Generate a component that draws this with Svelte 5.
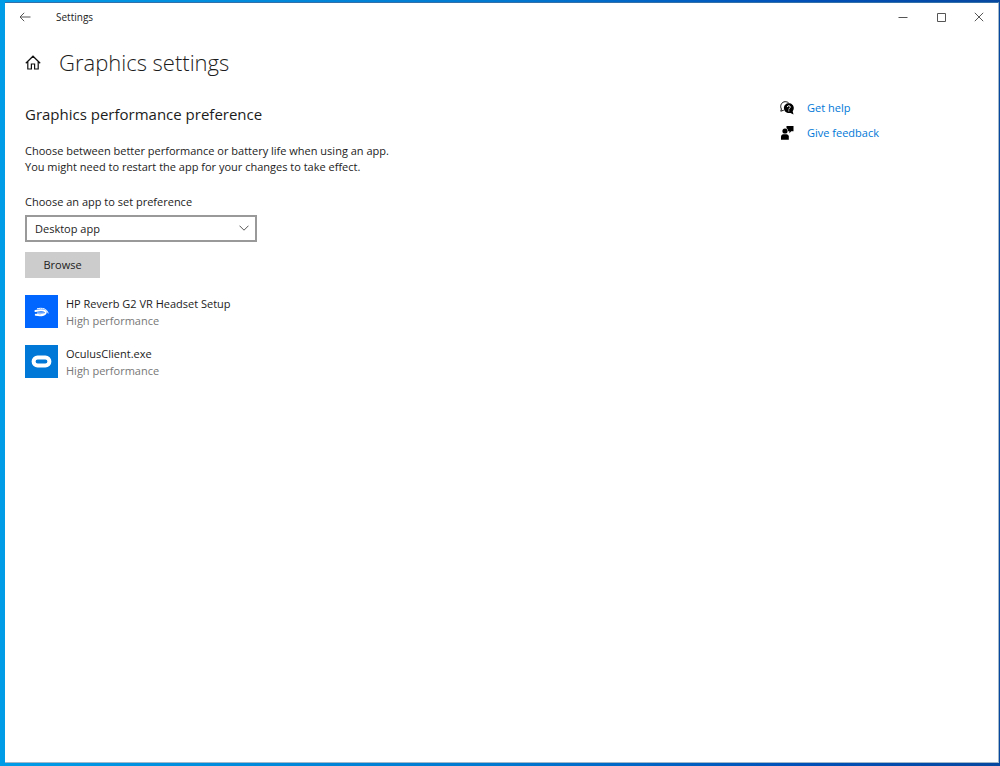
<script lang="ts">
  let selected = 'Desktop app';

  const apps = [
    { name: 'HP Reverb G2 VR Headset Setup', preference: 'High performance', icon: 'reverb' },
    { name: 'OculusClient.exe', preference: 'High performance', icon: 'oculus' }
  ];
</script>

<div class="desktop">
  <div class="window">
    <header class="titlebar">
      <button class="back" type="button" aria-label="Back">
        <svg width="12" height="10" viewBox="0 0 12 10"><path d="M11.5 5H1M5.2 0.8L1 5l4.2 4.2" /></svg>
      </button>
      <span class="caption">Settings</span>
      <div class="window-buttons">
        <button type="button" aria-label="Minimize">
          <svg width="10" height="10" viewBox="0 0 10 10"><path d="M0.5 5.5h9" /></svg>
        </button>
        <button type="button" aria-label="Maximize">
          <svg width="10" height="10" viewBox="0 0 10 10"><path d="M1.5 1.5h8v8h-8z" /></svg>
        </button>
        <button type="button" aria-label="Close">
          <svg width="10" height="10" viewBox="0 0 10 10"><path d="M0.8 0.8l8.4 8.4M9.2 0.8L0.8 9.2" /></svg>
        </button>
      </div>
    </header>

    <div class="page-title">
      <button class="home" type="button" aria-label="Home">
        <svg width="16" height="16" viewBox="0 0 16 16">
          <path d="M0.8 9.2L8 2.2l7.2 7M2.8 7.8v7.2h3.6V10h3.2v5h3.6V7.8" />
        </svg>
      </button>
      <h1>Graphics settings</h1>
    </div>

    <div class="content">
      <main>
        <h2>Graphics performance preference</h2>
        <p class="description">
          Choose between better performance or battery life when using an app.<br />
          You might need to restart the app for your changes to take effect.
        </p>

        <label for="app-type">Choose an app to set preference</label>
        <div class="select">
          <select id="app-type" bind:value={selected}>
            <option>Desktop app</option>
            <option>Microsoft Store app</option>
          </select>
          <svg width="10" height="6" viewBox="0 0 10 6"><path d="M0.5 0.7L5 5.2l4.5-4.5" /></svg>
        </div>

        <button class="browse" type="button">Browse</button>

        <ul class="apps">
          {#each apps as app}
            <li>
              <span class="tile {app.icon}">
                {#if app.icon === 'reverb'}
                  <svg width="33" height="33" viewBox="0 0 33 33">
                    <path class="thin" d="M12 13.8c5-1.2 10-.4 11.2 4.6" />
                    <path class="band" d="M10.4 16c4-.8 8.600-.8 10.200.6" />
                    <path class="band" d="M20.600 16.600c1 3-3.600 4.200-9.800 3.200" />
                    <path class="thin" d="M12 18.100h7" />
                  </svg>
                {:else}
                  <svg width="33" height="33" viewBox="0 0 33 33">
                    <rect class="ring" x="8.6" y="12.6" width="15.8" height="8" rx="4" />
                  </svg>
                {/if}
              </span>
              <div class="app-text">
                <span>{app.name}</span>
                <span class="preference">{app.preference}</span>
              </div>
            </li>
          {/each}
        </ul>
      </main>

      <aside>
        <a href="#help">
          <svg width="14" height="14" viewBox="0 0 14 14">
            <path class="outline" d="M0.8 10.2l.6-2.200C-.4 5 1.500.7 5.200.7c1.700 0 2.800.5 3.600 1.500M0.800 10.200l3-1" />
            <path
              class="fill"
              d="M8.8 2.2c2.9 0 5 2.1 5 4.8 0 1.200-.4 2.300-1.100 3.200l.8 3.300-3-1.600c-3.400.8-6.600-1.500-6.600-4.900 0-2.700 2.100-4.800 4.900-4.800z"
            />
            <path class="mark" d="M7.3 6.1c0-1.900 3-1.900 3 0 0 1.100-1.500 1.200-1.500 2.400M8.800 9.400v1" />
          </svg>
          Get help
        </a>
        <a href="#feedback">
          <svg width="14" height="14" viewBox="0 0 14 14">
            <path class="fill" d="M6.5 0h7v5.200h-2.300L9.400 7.200v-2H8.200C8 3.600 7.500 2.800 6.500 2.200z" />
            <circle class="fill" cx="5" cy="5" r="2.6" />
            <path class="fill" d="M1 13.800v-3.200C1 9.200 2 8.200 3.300 8.200h3.200c1.300 0 2.300 1 2.300 2.400v3.200z" />
          </svg>
          Give feedback
        </a>
      </aside>
    </div>
  </div>
</div>

<style>
  :global(body) {
    margin: 0;
  }

  .desktop {
    box-sizing: border-box;
    min-height: 100vh;
    display: flex;
    padding: 2px 1px 3px 5px;
    background: linear-gradient(90deg, #009ce8 0%, #0078d0 50%, #0050b8 80%, #0648a0 100%);
    font-family: 'Open Sans', 'Noto Sans', sans-serif;
    font-size: 11px;
    line-height: 16px;
    color: #1c1c1c;
  }

  .window {
    flex: 1;
    box-sizing: border-box;
    border: 1px solid #a3b8c8;
    border-top-color: #336fa8;
    border-left: none;
    background: #fff;
  }

  button {
    font: inherit;
    color: inherit;
    padding: 0;
    border: none;
    background: none;
  }

  svg {
    display: block;
    flex: none;
    fill: none;
    stroke: #555;
    stroke-width: 1;
  }

  .titlebar {
    display: flex;
    align-items: center;
    height: 27px;
  }

  .back {
    display: flex;
    justify-content: center;
    width: 40px;
  }

  .caption {
    flex: 1;
    margin-left: 11px;
    font-size: 10px;
  }

  .window-buttons {
    display: flex;
  }

  .window-buttons button {
    display: flex;
    align-items: center;
    justify-content: center;
    width: 38px;
    height: 26px;
  }

  .page-title {
    display: flex;
    align-items: center;
    gap: 18px;
    margin-top: 16px;
    padding-left: 20px;
  }

  .home svg {
    stroke: #111;
    stroke-width: 1.2;
  }

  h1 {
    margin: 0;
    font-size: 22px;
    line-height: 32px;
    font-weight: 350;
  }

  .content {
    display: grid;
    grid-template-columns: 1fr 218px;
    padding-left: 20px;
    margin-top: 22px;
  }

  h2 {
    margin: 0;
    font-size: 15px;
    line-height: 28px;
    font-weight: 400;
  }

  .description {
    margin: 15px 0 19px;
  }

  label {
    display: block;
    margin-bottom: 5px;
  }

  .select {
    position: relative;
    width: 232px;
  }

  select {
    box-sizing: border-box;
    width: 100%;
    height: 27px;
    padding: 0 24px 0 8px;
    border: 2px solid #999;
    border-radius: 0;
    background: #fff;
    color: inherit;
    font: inherit;
    appearance: none;
  }

  .select svg {
    position: absolute;
    right: 8px;
    top: 10px;
    pointer-events: none;
  }

  .browse {
    display: block;
    width: 75px;
    height: 26px;
    margin-top: 10px;
    background: #ccc;
  }

  .apps {
    display: grid;
    gap: 16px;
    margin: 17px 0 0;
    padding: 0;
    list-style: none;
  }

  li {
    display: flex;
    gap: 8px;
  }

  .tile {
    width: 33px;
    height: 33px;
  }

  .reverb {
    background: #0066ff;
  }

  .oculus {
    background: #0078d7;
  }

  .thin {
    stroke: #fff;
    stroke-width: 1;
  }

  .band {
    stroke: #fff;
    stroke-width: 2;
    stroke-linecap: round;
  }

  .ring {
    stroke: #fff;
    stroke-width: 4;
  }

  .app-text {
    display: flex;
    flex-direction: column;
    line-height: 17px;
  }

  .preference {
    color: #777;
  }

  aside {
    display: flex;
    flex-direction: column;
    gap: 9px;
  }

  a {
    display: flex;
    align-items: center;
    gap: 13px;
    color: #0078d7;
    text-decoration: none;
  }

  .outline {
    stroke: #111;
  }

  .fill {
    fill: #000;
    stroke: none;
  }

  .mark {
    stroke: #fff;
  }
</style>
